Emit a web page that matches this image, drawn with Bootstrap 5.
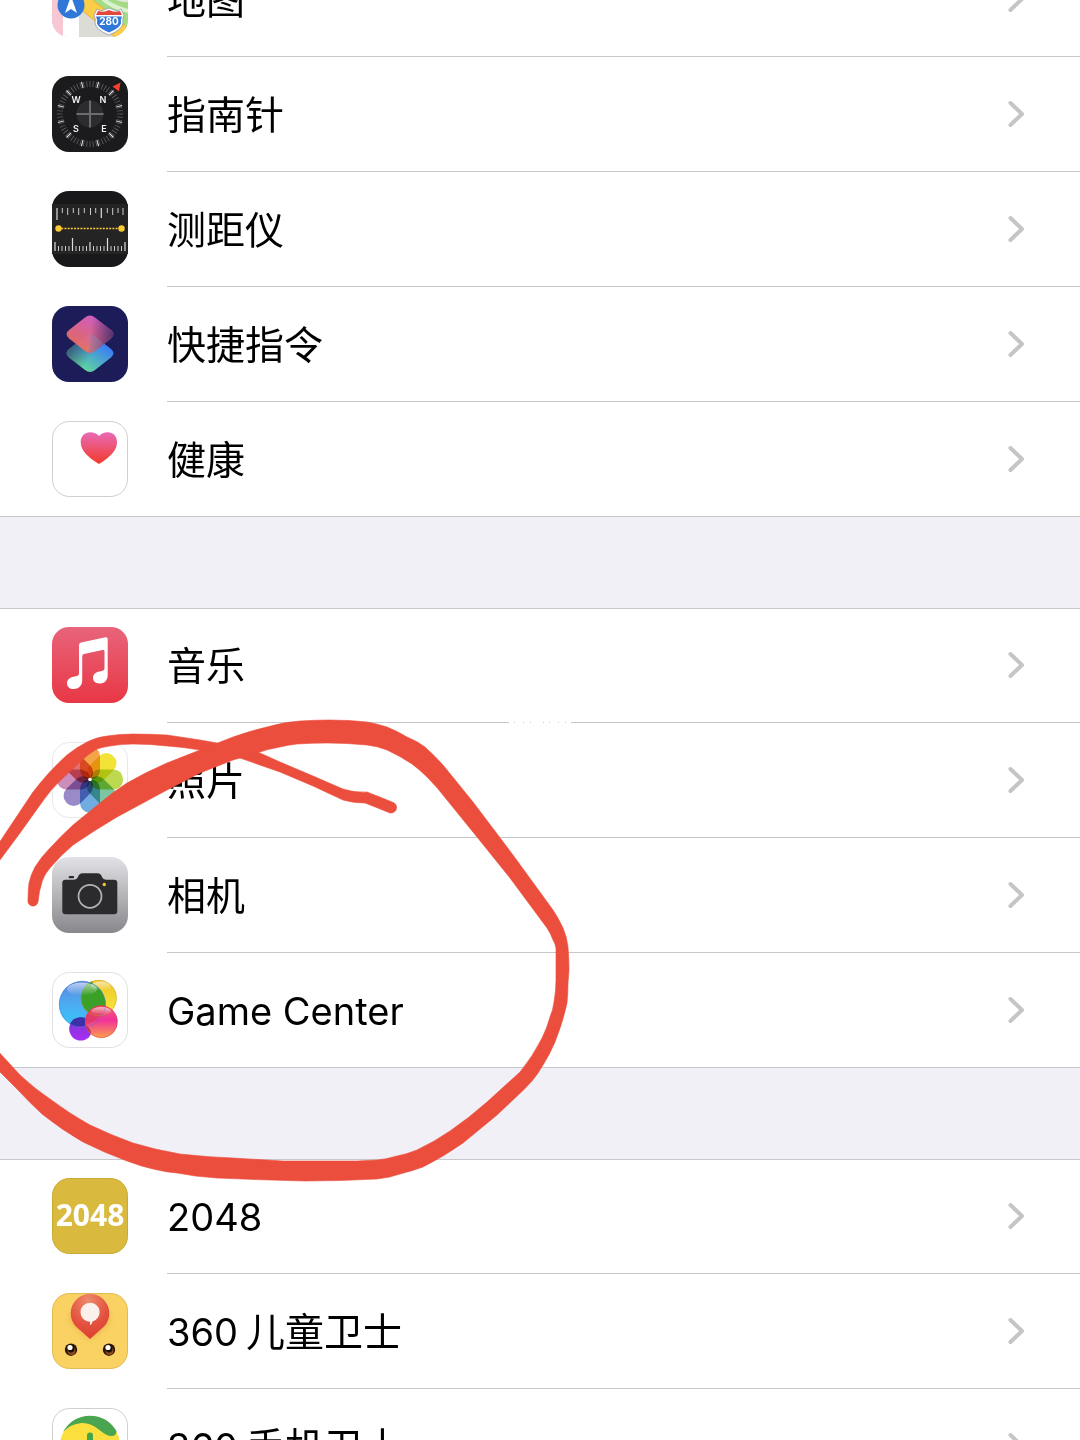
<!DOCTYPE html>
<html lang="zh-CN">
<head>
<meta charset="utf-8">
<meta name="viewport" content="width=device-width, initial-scale=1">
<title>设置</title>
<link href="https://cdn.jsdelivr.net/npm/bootstrap@5.3.0/dist/css/bootstrap.min.css" rel="stylesheet">
<style>
  body { background: #f1f0f6; color: #000; font-family: Inter, "Noto Sans CJK SC", sans-serif; font-size: 39px; line-height: 48px; }
  .scroller { --line: #c8c7cc; }
  .settings { gap: 91px; }
  .settings.scrolled { margin-top: -58px; }
  .app-group { background: #fff; border-bottom: 1px solid var(--line); }
  .app-group + .app-group { border-top: 1px solid var(--line); }
  .app-group + .app-group .app-row:first-child { margin-top: -1px; }
  .app-row { height: 115px; padding-left: 52px; gap: 39px; color: #000; }
  .app-row:last-child { margin-bottom: -1px; }
  .app-icon { width: 76px; height: 76px; margin-bottom: 2px; }
  .app-label { border-bottom: 1px solid var(--line); padding-right: 54px; padding-top: 2px; }
  .app-row:last-child .app-label { border-bottom-color: transparent; }
  .latin { font-size: 38px; }
  .chevron { width: 19px; height: 30px; margin-bottom: 3px; }
  .ink { width: 600px; height: 1240px; pointer-events: none; }
  .petals rect { mix-blend-mode: multiply; }
</style>
<script src="https://cdn.jsdelivr.net/npm/bootstrap@5.3.0/dist/js/bootstrap.bundle.min.js"></script>
</head>
<body>
<svg width="0" height="0" class="position-absolute" aria-hidden="true">
  <defs>
    <clipPath id="tile"><rect width="76" height="76" rx="17"/></clipPath>
    <symbol id="chev" viewBox="0 0 19 30"><path d="M3.500 4L15 15 3.500 26" fill="none" stroke="#c5c5c8" stroke-width="4" stroke-linecap="round" stroke-linejoin="round"/></symbol>
    <linearGradient id="gHeart" x2="0" y2="1"><stop stop-color="#e86bb8"/><stop offset="1" stop-color="#f23a27"/></linearGradient>
    <linearGradient id="gMusic" x2="0" y2="1"><stop stop-color="#e8647a"/><stop offset="1" stop-color="#e83745"/></linearGradient>
    <linearGradient id="gCam" x2="0" y2="1"><stop stop-color="#e2e1e6"/><stop offset="1" stop-color="#88878c"/></linearGradient>
    <linearGradient id="gTop" x1=".25" y1=".9" x2=".75" y2=".1"><stop stop-color="#f0705a"/><stop offset="1" stop-color="#dc62c8"/></linearGradient>
    <linearGradient id="gShade" x1=".5" y1=".5" x2="1" y2=".55"><stop stop-color="#3b2a60" stop-opacity="0"/><stop offset="1" stop-color="#3b2a60" stop-opacity=".85"/></linearGradient>
    <linearGradient id="gLow" x1=".3" y1=".9" x2=".8" y2=".3"><stop stop-color="#62d89c"/><stop offset="1" stop-color="#3a80f4"/></linearGradient>
    <linearGradient id="gLowShade" x1=".5" y1=".6" x2="0" y2=".35"><stop stop-color="#2c3565" stop-opacity="0"/><stop offset="1" stop-color="#2c3565" stop-opacity=".8"/></linearGradient>
    <linearGradient id="gBlue" x2="0" y2="1"><stop stop-color="#5c86dc"/><stop offset=".5" stop-color="#4cacf2"/><stop offset="1" stop-color="#35c8f8"/></linearGradient>
    <linearGradient id="gYel" x2="0" y2="1"><stop stop-color="#ecc52c"/><stop offset="1" stop-color="#fbe93a"/></linearGradient>
    <linearGradient id="gPink" x2="0" y2="1"><stop stop-color="#f4606c"/><stop offset=".45" stop-color="#f0329a"/><stop offset="1" stop-color="#fba04a"/></linearGradient>
    <linearGradient id="gPur" x2="0" y2="1"><stop stop-color="#7a3ad0"/><stop offset="1" stop-color="#a82cf4"/></linearGradient>
    <linearGradient id="gGloss" x2="0" y2="1"><stop stop-color="#fff" stop-opacity=".6"/><stop offset="1" stop-color="#fff" stop-opacity="0"/></linearGradient>
    <radialGradient id="gPin" cx=".45" cy=".15" r=".8"><stop stop-color="#ee8a6a"/><stop offset=".7" stop-color="#e34f3d"/><stop offset="1" stop-color="#de4234"/></radialGradient>
    <filter id="soft" x="-50%" y="-50%" width="200%" height="200%"><feGaussianBlur stdDeviation="3"/></filter>
  </defs>
</svg>

<main class="scroller position-relative vh-100 overflow-hidden">
  <div class="settings scrolled d-flex flex-column">

    <nav class="app-group" aria-label="系统工具">
      <a href="#" class="app-row d-flex align-items-center text-decoration-none">
        <svg class="app-icon flex-shrink-0" viewBox="0 0 76 76" aria-hidden="true"><g clip-path="url(#tile)">
          <rect width="76" height="76" fill="#dcdcd6"/>
          <path d="M26 0h50v66L27 36z" fill="#a4dc86"/>
          <path d="M58 36q10 6 18 5V30H54z" fill="#e6e6e0"/>
          <rect width="11" height="76" fill="#f7c8d4"/><rect x="11" width="16" height="76" fill="#fff"/>
          <path d="M20 30l12 2 44 35v9H63L27 47z" fill="#fbcd48" stroke="#eeb02c"/>
          <path d="M50 34q6 8 26 14v4q-22-5-31-18z" fill="#fff" opacity=".6"/>
          <circle cx="19" cy="44" r="13.5" fill="#2f78d8"/>
          <path d="M19 35l6 17-6-4-6 4z" fill="#fff"/>
          <path d="M45 48l4 2 8-3 8 3 4-2 3 6q-2 4-1 8-1 7-14 12-13-5-14-12 1-4-1-8z" fill="#fff" stroke="#8f99ac" stroke-width=".8"/>
          <path d="M46 50q6 2 11-1 5 3 11 1l2 4H44z" fill="#e2483c"/>
          <path d="M44 55.500h26q-2 4-1 7-2 5-12 9-10-4-12-9 1-3-1-7z" fill="#2f78d8"/>
          <text x="57" y="64" text-anchor="middle" font-family="Inter" font-size="10" font-weight="700" fill="#fff">280</text>
        </g></svg>
        <span class="app-label d-flex align-items-center justify-content-between flex-grow-1 align-self-stretch"><span>地图</span><svg class="chevron"><use href="#chev"/></svg></span>
      </a>
      <a href="#" class="app-row d-flex align-items-center text-decoration-none">
        <svg class="app-icon flex-shrink-0" viewBox="0 0 76 76" aria-hidden="true">
          <rect width="76" height="76" rx="17" fill="#1b1b1d"/>
          <circle cx="38" cy="38" r="30" fill="none" stroke="#626264" stroke-width="6" pathLength="360" stroke-dasharray="1.600 4.400" stroke-dashoffset=".8"/>
          <circle cx="38" cy="38" r="30" fill="none" stroke="#e6e6e6" stroke-width="6.500" pathLength="360" stroke-dasharray="2 28" stroke-dashoffset="-14"/>
          <circle cx="38" cy="38" r="13.500" fill="#2c2c2e"/>
          <path d="M38 24.500v27M24.500 38h27" stroke="#6c6c6e" stroke-width="2"/>
          <path d="M60.500 10.500l8-4-1.500 9z" fill="#f2402e"/>
          <g font-family="Inter" font-size="9" font-weight="600" fill="#f2f2f2" text-anchor="middle"><text x="24" y="27">W</text><text x="51" y="27">N</text><text x="24" y="56">S</text><text x="52" y="56">E</text></g>
        </svg>
        <span class="app-label d-flex align-items-center justify-content-between flex-grow-1 align-self-stretch"><span>指南针</span><svg class="chevron"><use href="#chev"/></svg></span>
      </a>
      <a href="#" class="app-row d-flex align-items-center text-decoration-none">
        <svg class="app-icon flex-shrink-0" viewBox="0 0 76 76" aria-hidden="true">
          <rect width="76" height="76" rx="17" fill="#19191b"/><rect y="13" width="76" height="50" fill="#242424"/>
          <path d="M5 17v12M49.300 17v10" stroke="#ddd" stroke-width="1.200"/>
          <path d="M10.300 17v5M15.700 17v7M21.300 17v5M26.700 17v7M32.300 17v5M38.500 17v7M43.700 17v5M55.300 17v5M60.700 17v7M66 17v5M71 17v7" stroke="#ccc"/>
          <path d="M6.500 60v-5M10 60v-5M13.500 60v-5M17 60v-5M24 60v-5M27.500 60v-5M31 60v-5M34.500 60v-5M41.500 60v-5M45 60v-5M48.500 60v-5M52 60v-5M59 60v-5M62.500 60v-5M66 60v-5M69.500 60v-5" stroke="#ccc"/>
          <path d="M3 60v-9M38 60v-9M73 60v-9M20.500 60V47M55.500 60V47" stroke="#ddd" stroke-width="1.200"/>
          <path d="M6 37.500h64" stroke="#fbc934" stroke-width="1.600" stroke-dasharray="2 1.200"/><circle cx="6.500" cy="37.500" r="3.200" fill="#fbc934"/><circle cx="69.500" cy="37.500" r="3.200" fill="#fbc934"/>
        </svg>
        <span class="app-label d-flex align-items-center justify-content-between flex-grow-1 align-self-stretch"><span>测距仪</span><svg class="chevron"><use href="#chev"/></svg></span>
      </a>
      <a href="#" class="app-row d-flex align-items-center text-decoration-none">
        <svg class="app-icon flex-shrink-0" viewBox="0 0 76 76" aria-hidden="true">
          <rect width="76" height="76" rx="17" fill="#1c1d58"/>
          <path d="M33 30.500q5-4 10 0L59 43q5 4 0 8.500L43 64q-5 4-10 0L17 51.500q-5-4.500 0-8.500z" fill="url(#gLow)"/>
          <path d="M33 30.500q5-4 10 0L59 43q5 4 0 8.500L43 64q-5 4-10 0L17 51.500q-5-4.500 0-8.500z" fill="url(#gLowShade)"/>
          <path d="M33 11.500q5-4 10 0L59 24q5 4 0 8.500L43 45q-5 4-10 0L17 32.500q-5-4.500 0-8.500z" fill="url(#gTop)" opacity=".93"/>
          <path d="M33 11.500q5-4 10 0L59 24q5 4 0 8.500L43 45q-5 4-10 0L17 32.500q-5-4.500 0-8.500z" fill="url(#gShade)"/>
          <path d="M38 28.500q4 0 7 3.500l6 5-8 8q-2 2-5 2z" fill="#7a8cc8" opacity=".3"/>
        </svg>
        <span class="app-label d-flex align-items-center justify-content-between flex-grow-1 align-self-stretch"><span>快捷指令</span><svg class="chevron"><use href="#chev"/></svg></span>
      </a>
      <a href="#" class="app-row d-flex align-items-center text-decoration-none">
        <svg class="app-icon flex-shrink-0" viewBox="0 0 76 76" aria-hidden="true">
          <rect x=".5" y=".5" width="75" height="75" rx="17" fill="#fff" stroke="#cfcfd2"/>
          <path d="M47 43C36 36 28.700 30 28.700 21c0-6 4.500-9.700 9.300-9.700 4 0 7 1.500 9 3.700 2-2.200 5-3.700 9-3.700 4.800 0 9 3.700 9 9.700 0 9-7 15-18 22z" fill="url(#gHeart)"/>
        </svg>
        <span class="app-label d-flex align-items-center justify-content-between flex-grow-1 align-self-stretch"><span>健康</span><svg class="chevron"><use href="#chev"/></svg></span>
      </a>
    </nav>

    <nav class="app-group" aria-label="媒体">
      <a href="#" class="app-row d-flex align-items-center text-decoration-none">
        <svg class="app-icon flex-shrink-0" viewBox="0 0 76 76" aria-hidden="true">
          <rect width="76" height="76" rx="17" fill="url(#gMusic)"/>
          <path d="M27 18q0-2 2-2.500l24.500-5.300q2.200-.4 2.200 1.800V48c0 6-3.700 8.500-8.200 8.500-4 0-6.500-2.300-6.500-5.700 0-3.600 2.600-5.500 6.500-6.300l3-.7q2-.5 2-2.500V24.500q0-2-2-1.600l-18.500 4q-1.800.4-1.800 2.400V53c0 6-3.700 9-8.500 9-4 0-6.700-2.300-6.700-5.800 0-3.600 2.800-5.600 6.500-6.400l3.300-.7q2.200-.5 2.200-2.600z" fill="#fff"/>
        </svg>
        <span class="app-label d-flex align-items-center justify-content-between flex-grow-1 align-self-stretch"><span>音乐</span><svg class="chevron"><use href="#chev"/></svg></span>
      </a>
      <a href="#" class="app-row d-flex align-items-center text-decoration-none">
        <svg class="app-icon flex-shrink-0" viewBox="0 0 76 76" aria-hidden="true">
          <rect x=".5" y=".5" width="75" height="75" rx="17" fill="#fff" stroke="#e8e8ea"/>
          <g class="petals">
            <rect x="28" y="4.500" width="20" height="33" rx="9.500" fill="#f4a548"/>
            <rect x="28" y="4.500" width="20" height="33" rx="9.500" fill="#f1e436" transform="rotate(45 38 37.500)"/>
            <rect x="28" y="4.500" width="20" height="33" rx="9.500" fill="#bdd94f" transform="rotate(90 38 37.500)"/>
            <rect x="28" y="4.500" width="20" height="33" rx="9.500" fill="#7cc6a2" transform="rotate(135 38 37.500)"/>
            <rect x="28" y="4.500" width="20" height="33" rx="9.500" fill="#70acdf" transform="rotate(180 38 37.500)"/>
            <rect x="28" y="4.500" width="20" height="33" rx="9.500" fill="#9a8bc8" transform="rotate(225 38 37.500)"/>
            <rect x="28" y="4.500" width="20" height="33" rx="9.500" fill="#cb8dba" transform="rotate(270 38 37.500)"/>
            <rect x="28" y="4.500" width="20" height="33" rx="9.500" fill="#e3706e" transform="rotate(315 38 37.500)"/>
          </g><circle cx="38" cy="37.500" r="1.800" fill="#fff"/>
        </svg>
        <span class="app-label d-flex align-items-center justify-content-between flex-grow-1 align-self-stretch"><span>照片</span><svg class="chevron"><use href="#chev"/></svg></span>
      </a>
      <a href="#" class="app-row d-flex align-items-center text-decoration-none">
        <svg class="app-icon flex-shrink-0" viewBox="0 0 76 76" aria-hidden="true">
          <rect width="76" height="76" rx="17" fill="url(#gCam)"/>
          <path d="M13.500 22.700H22q3 0 4-2.700 1.200-3.700 4.500-3.700h15q3.300 0 4.500 3.700 1 2.700 4 2.700h8q3.300 0 3.300 3.300v28q0 3.300-3.300 3.300H13.500q-3.200 0-3.200-3.300V26q0-3.300 3.200-3.300z" fill="#2b2b2d"/>
          <rect x="16.700" y="19" width="5.300" height="2.200" rx=".8" fill="#2b2b2d"/>
          <circle cx="38" cy="39.300" r="11.500" fill="none" stroke="#b4b3b8" stroke-width="1.700"/><circle cx="52.300" cy="27.500" r="1.700" fill="#fbc52c"/>
        </svg>
        <span class="app-label d-flex align-items-center justify-content-between flex-grow-1 align-self-stretch"><span>相机</span><svg class="chevron"><use href="#chev"/></svg></span>
      </a>
      <a href="#" class="app-row d-flex align-items-center text-decoration-none">
        <svg class="app-icon flex-shrink-0" viewBox="0 0 76 76" aria-hidden="true">
          <rect x=".5" y=".5" width="75" height="75" rx="17" fill="#fff" stroke="#e0e0e2"/>
          <circle cx="46.700" cy="26" r="18" fill="url(#gYel)"/>
          <circle cx="30.300" cy="32.300" r="23.300" fill="url(#gBlue)"/>
          <path d="M40.500 9.200A18 18 0 0 0 46 44L48.400 47A23.300 23.300 0 0 0 40.500 11.400z" fill="#3aa028"/>
          <circle cx="28.700" cy="57" r="11.500" fill="url(#gPur)"/><path d="M18 52.500a11.500 11.500 0 0 1 20.700-1.500A23.300 23.300 0 0 1 18 52.500z" fill="#3b30a8"/>
          <circle cx="49.300" cy="49.700" r="16.300" fill="url(#gPink)"/>
          <path d="M34 44.500a16.300 16.300 0 0 1 18-11q1 4-4.500 11-6 6-13 8.200-1.500-4-.5-8.200z" fill="#d83a50" opacity=".6"/>
          <path d="M33.300 53a11.500 11.500 0 0 1 6 9 16 16 0 0 1-6-9z" fill="#a01868" opacity=".7"/>
          <ellipse cx="30" cy="17" rx="15" ry="6.500" fill="url(#gGloss)"/><ellipse cx="49" cy="14" rx="10" ry="4.500" fill="url(#gGloss)"/><ellipse cx="49.300" cy="39" rx="10" ry="4" fill="url(#gGloss)"/>
          <g fill="none" stroke-width=".7" stroke-opacity=".6"><circle cx="46.700" cy="26" r="17.700" stroke="#c0a020"/><circle cx="30.300" cy="32.300" r="23" stroke="#3a78d0"/><circle cx="49.300" cy="49.700" r="16" stroke="#d83a50"/></g>
        </svg>
        <span class="app-label d-flex align-items-center justify-content-between flex-grow-1 align-self-stretch"><span class="latin">Game Center</span><svg class="chevron"><use href="#chev"/></svg></span>
      </a>
    </nav>

    <nav class="app-group" aria-label="应用">
      <a href="#" class="app-row d-flex align-items-center text-decoration-none">
        <svg class="app-icon flex-shrink-0" viewBox="0 0 76 76" aria-hidden="true">
          <rect x=".5" y=".5" width="75" height="75" rx="17" fill="#d9ba3e" stroke="#c9ab34"/>
          <text x="38" y="48" text-anchor="middle" font-family="Open Sans" font-weight="700" font-size="30" fill="#fff">2048</text>
        </svg>
        <span class="app-label d-flex align-items-center justify-content-between flex-grow-1 align-self-stretch"><span class="latin">2048</span><svg class="chevron"><use href="#chev"/></svg></span>
      </a>
      <a href="#" class="app-row d-flex align-items-center text-decoration-none">
        <svg class="app-icon flex-shrink-0" viewBox="0 0 76 76" aria-hidden="true">
          <rect x=".5" y=".5" width="75" height="75" rx="17" fill="#f9d263" stroke="#e2bb50"/>
          <path d="M38 46L23 33Q18 27 18.700 20h38.600Q58 27 53 33z" fill="#e08a30" opacity=".55" filter="url(#soft)"/>
          <path d="M38 46L24 33.500A19.300 19.300 0 1 1 52 33.500z" fill="url(#gPin)"/>
          <path d="M38 9.700a9.500 9.500 0 0 1 2.500 18.700Q40 31 38 32.300V28.700A9.500 9.500 0 0 1 38 9.700z" fill="#fbf1ec"/>
          <g><circle cx="19" cy="56.700" r="6.200" fill="#2a1608"/><circle cx="19.500" cy="58" r="4" fill="#8a4a1c"/><circle cx="19" cy="56" r="3.400" fill="#1c0e06"/><circle cx="18" cy="54.500" r="2.600" fill="#fff"/></g>
          <g><circle cx="57" cy="56.700" r="6.200" fill="#2a1608"/><circle cx="57.500" cy="58" r="4" fill="#8a4a1c"/><circle cx="57" cy="56" r="3.400" fill="#1c0e06"/><circle cx="56" cy="54.500" r="2.600" fill="#fff"/></g>
        </svg>
        <span class="app-label d-flex align-items-center justify-content-between flex-grow-1 align-self-stretch"><span><span class="latin me-2">360</span>儿童卫士</span><svg class="chevron"><use href="#chev"/></svg></span>
      </a>
      <a href="#" class="app-row d-flex align-items-center text-decoration-none">
        <svg class="app-icon flex-shrink-0" viewBox="0 0 76 76" aria-hidden="true">
          <rect x=".5" y=".5" width="75" height="75" rx="17" fill="#fff" stroke="#cfcfd2"/>
          <circle cx="38" cy="38" r="30" fill="#fbdf3c"/>
          <path d="M11 24Q20 8 38 7.700q17 0 26.500 15.300 0 5-5 5-5 0-12-6-9-7.500-18-7Q18 16 11 24z" fill="#4aa551"/>
          <path d="M38 27.500V50M27 39h22" stroke="#43a648" stroke-width="6" stroke-linecap="round"/>
        </svg>
        <span class="app-label d-flex align-items-center justify-content-between flex-grow-1 align-self-stretch"><span><span class="latin me-2">360</span>手机卫士</span><svg class="chevron"><use href="#chev"/></svg></span>
      </a>
    </nav>
  </div>

  <!-- freehand marker loop drawn over the list -->
  <svg class="ink position-absolute top-0 start-0" viewBox="0 0 600 1240" aria-hidden="true">
    <path d="M509 722h62" stroke="#fff" stroke-width="5" stroke-dasharray="5 1 8 1 6 1 12 1"/>
    <g fill="#eb4e3c" stroke="#eb4e3c" stroke-width=".6" stroke-linejoin="round">
      <path d="M-3 846L33 792Q50 770 67 755Q77 747 87 742Q97 737 107 736Q120 734 133 734Q150 734 167 735L200 740L217 743L260 753L280 762L313 776L343 789Q355 793 367 792Q380 797 392 802A5.500 5.500 0 0 1 390 813Q378 808 365 803Q353 803 343 800L313 786L280 772L240 758L200 750Q183 747 167 746Q150 744 133 744Q120 744 110 746Q103 747 97 749Q88 754 80 762L63 778Q50 790 40 805L20 833L-3 864z"/>
      <path d="M28 900Q28 890 29 883Q31 874 35 867Q41 857 50 848Q61 836 73 825L100 803Q113 792 127 783Q146 772 167 763L200 750L233 737Q250 731 267 727Q284 722 300 721Q315 720 330 720Q350 720 367 722Q378 724 387 727Q397 731 407 737Q417 741 425 747Q434 755 443 765L473 802L513 855L553 910Q559 919 563 928Q567 937 568 947Q569 958 569 970L568 983Q568 993 567 1003Q563 1022 555 1042Q550 1054 543 1065Q538 1074 532 1081Q524 1090 515 1098L497 1115L463 1143Q443 1157 423 1167Q412 1171 400 1174Q389 1178 377 1179Q340 1181 305 1181Q260 1180 217 1178Q197 1177 177 1173Q165 1172 153 1169Q140 1166 127 1161Q105 1153 83 1142Q62 1130 42 1114Q29 1102 17 1089L-3 1069V1050L20 1075Q35 1089 50 1099Q70 1114 90 1125Q111 1135 133 1143Q156 1150 180 1154Q207 1157 233 1158L283 1161H357L377 1160Q387 1159 397 1156Q407 1154 417 1150Q434 1142 450 1131Q469 1118 487 1102L520 1072Q533 1056 542 1038Q547 1028 550 1017Q553 1010 554 1002Q556 991 556 980V948Q555 943 553 940Q551 934 547 928L510 878L477 837L447 800Q438 788 427 777Q420 770 412 764Q400 756 387 750Q377 746 367 745Q347 743 327 743Q312 743 297 744Q288 745 280 747Q268 749 257 753L233 760L200 773L167 790L117 817Q95 830 73 845Q61 855 50 868Q44 875 42 882Q39 891 38 902A5 5 0 0 1 28 900z"/>
    </g>
  </svg>
</main>
</body>
</html>
